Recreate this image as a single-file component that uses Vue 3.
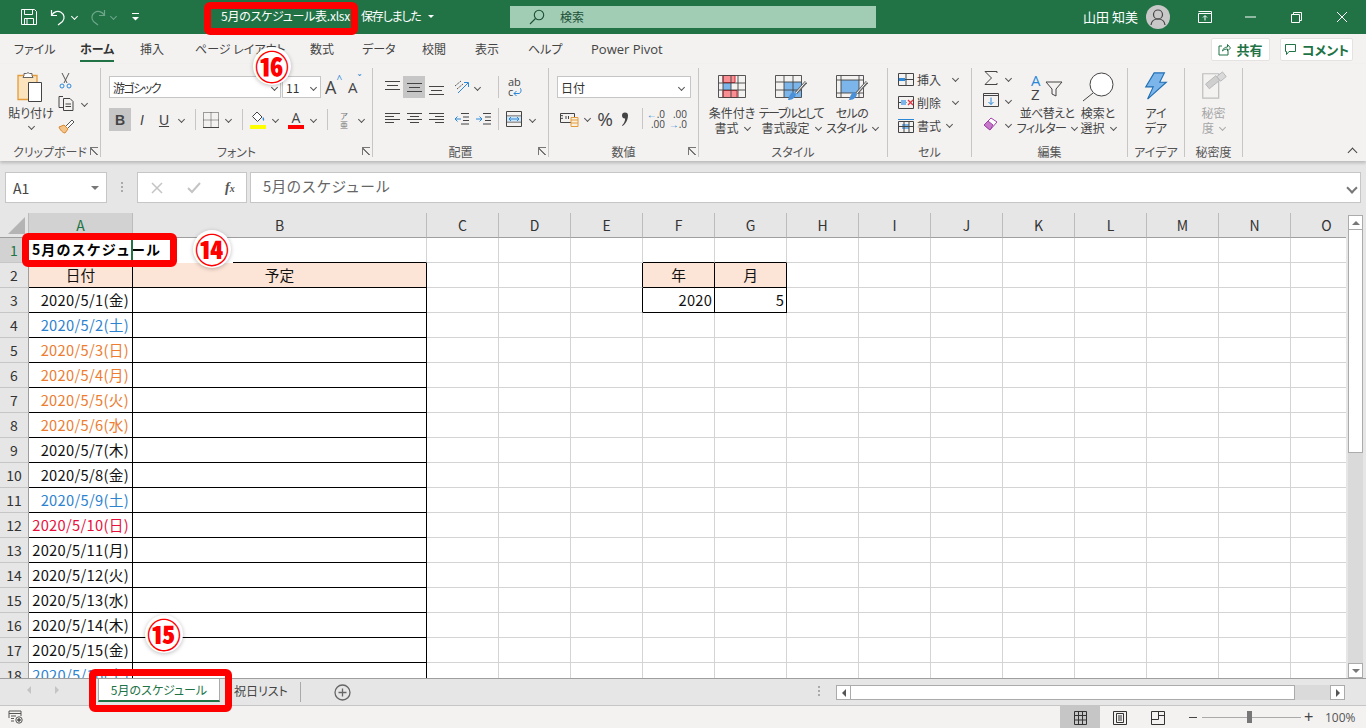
<template>
  <div class="app">
    <header class="titlebar">
      <svg class="qat-save" width="18" height="18" viewBox="0 0 18 18" fill="none" stroke="#fff"><path d="M1.5 1.5h13l2 2v13h-15z"/><path d="M4.5 1.500v5h8v-5M4.500 16.500v-6h9v6M7 10.500v6"/></svg>
      <svg class="qat-undo" width="17" height="18" viewBox="0 0 17 18" fill="none" stroke="#fff" stroke-width="1.2"><path d="M1.5 2v5.5H7M1.8 7C4 3.5 8 2.5 11 4.2c3.5 2 4 6.500 1.500 9.300L8 17"/></svg>
      <i class="chev white qat-c1"></i>
      <svg class="qat-redo" width="17" height="18" viewBox="0 0 17 18" fill="none" stroke="#6ea58a" stroke-width="1.2"><path d="M15.500 2v5.500H10M15.200 7C13 3.500 9 2.500 6 4.200c-3.500 2-4 6.500-1.500 9.300L9 17"/></svg>
      <i class="chev dim qat-c2"></i>
      <svg class="qat-more" width="9" height="9" viewBox="0 0 9 9" fill="#fff"><rect x="1" y="0" width="7" height="1"/><path d="M1 4h7L4.500 7.500z"/></svg>
      <span class="doc-name">5月のスケジュール表.xlsx</span>
      <span class="doc-dash">-</span>
      <span class="doc-state">保存しました</span>
      <i class="caret-down"></i>
      <div class="searchbox">
        <svg width="16" height="16" viewBox="0 0 16 16" fill="none" stroke="#1d4f38" stroke-width="1.100"><circle cx="10" cy="6" r="4.700"/><path d="M6.500 9.500L1 15"/></svg>
        <span>検索</span>
      </div>
      <span class="username">山田 知美</span>
      <div class="avatar">
        <svg width="24" height="24" viewBox="0 0 24 24" fill="none" stroke="#444" stroke-width="1.200"><circle cx="12" cy="9.500" r="4.500"/><path d="M5 20c.5-4 3.500-6 7-6s6.500 2 7 6"/></svg>
      </div>
      <svg class="win-ribbon" width="14" height="12" viewBox="0 0 14 12" fill="none" stroke="#fff"><path d="M.5 2.500h13v9H.5zM.5.500h13v2"/><path d="M7 9.500V5M5 6.500l2-2 2 2"/></svg>
      <svg class="win-min" width="11" height="2" viewBox="0 0 11 2"><rect width="11" height="1" y=".5" fill="#fff"/></svg>
      <svg class="win-max" width="11" height="11" viewBox="0 0 11 11" fill="none" stroke="#fff"><path d="M.5 2.500h8v8h-8zM2.500 2.500v-2h8v8h-2"/></svg>
      <svg class="win-close" width="12" height="12" viewBox="0 0 12 12" fill="none" stroke="#fff"><path d="M1 1l10 10M11 1L1 11"/></svg>
    </header>

    <nav class="tabs">
      <span class="tab-track" v-for="t in tabs" :key="t.label" :style="{ width: t.width + 'px' }">
        <span class="tab-label" :class="{ active: t.active, latin: t.latin }">{{ t.label }}</span>
      </span>
      <div class="tabs-actions">
        <button class="share-btn share">
          <svg width="13" height="13" viewBox="0 0 13 13" fill="none" stroke="#217346"><path d="M4 3H1v9h9V8M4.500 8C5 5.500 7 4 9.500 4V1.500L12.500 5 9.500 8V6C7.500 6 6 6.500 4.500 8z"/></svg>
          <span>共有</span>
        </button>
        <button class="share-btn comment">
          <svg width="13" height="13" viewBox="0 0 13 13" fill="none" stroke="#217346"><path d="M1.500 1.500h10v7H5l-2.500 3v-3h-1z"/></svg>
          <span>コメント</span>
        </button>
      </div>
    </nav>

    <section class="ribbon">
      <div class="group g-clip">
        <div class="body clip-body">
          <div class="big-btn paste">
            <svg width="30" height="32" viewBox="0 0 30 32" fill="none">
              <path d="M2 4.500h19v24H2z" fill="#fbe3bd" stroke="#e39c3c" stroke-width="1.300"/>
              <path d="M8 4.500V2.500h2.500a2 2 0 0 1 3 0H16v2l1 2H7z" fill="#fff" stroke="#666"/>
              <path d="M12.500 11.500h13v19h-13z" fill="#fff" stroke="#444"/>
            </svg>
            <span class="big-text">貼り付け</span>
            <i class="chev"></i>
          </div>
          <div class="clip-col">
            <svg width="16" height="17" viewBox="0 0 16 17" fill="none" stroke="#555"><path d="M4 1l5 10M11 1L6 11"/><circle cx="4" cy="14" r="2" stroke="#2b88d8"/><circle cx="11" cy="14" r="2" stroke="#2b88d8"/></svg>
            <div class="row-ic">
              <svg width="17" height="17" viewBox="0 0 17 17" fill="none" stroke="#444"><path d="M5 1.500H1v11h4"/><path d="M5.500 3.500H12l3 3v9H5.500zM7.500 9h5.500M7.500 11.500h5.500"/></svg>
              <i class="chev"></i>
            </div>
            <svg width="17" height="16" viewBox="0 0 17 16" fill="none"><path d="M1 9l5-2 4 4-3 4c-2 0-5-3-6-6z" fill="#f3c489" stroke="#d9862b"/><path d="M8 8l6-6 2 2-6 6" stroke="#555" fill="#fff"/></svg>
          </div>
        </div>
        <div class="glabel">クリップボード</div>
        <i class="launch"></i>
      </div>

      <div class="group g-font">
        <div class="body font-body">
          <div class="tool-row">
            <div class="combo font-name"><span>游ゴシック</span><i class="chev"></i></div>
            <div class="combo font-size"><span>11</span><i class="chev"></i></div>
            <span class="grow-a big">A<sup>^</sup></span>
            <span class="grow-a small">A<sup>ˇ</sup></span>
          </div>
          <div class="tool-row second">
            <span class="fmt-btn on"><b>B</b></span>
            <span class="fmt-btn ital">I</span>
            <span class="fmt-btn under">U</span><i class="chev c-u"></i>
            <span class="sep sep-1"></span>
            <svg class="ic-border" width="16" height="16" viewBox="0 0 16 16" fill="none" stroke="#444" stroke-dasharray="1 1"><path d="M.5.500h15v15H.5zM8 .5v15M.5 8h15"/><path d="M0 15.500h16" stroke-dasharray="none"/></svg><i class="chev c-b"></i>
            <span class="sep sep-2"></span>
            <svg class="ic-fill" width="16" height="18" viewBox="0 0 16 18" fill="none"><path d="M7 1l5 5-4.500 4.500-5-5z" stroke="#444" fill="#fff"/><path d="M13 6c1.500 1.500 1.500 3 .5 4-.6-.8-1-1.500-1-2.500z" fill="#2b88d8"/><rect y="14" width="16" height="4" fill="#ffff00"/></svg><i class="chev c-f"></i>
            <span class="color-a">A</span><i class="chev c-a"></i>
            <span class="sep sep-3"></span>
            <span class="phonetic"><small>ア</small><em>亜</em></span><i class="chev c-p"></i>
          </div>
        </div>
        <div class="glabel">フォント</div>
        <i class="launch"></i>
      </div>

      <div class="group g-align">
        <div class="body">
          <div class="tool-row al-row">
            <span class="al-slot"><svg class="high" width="15" height="10" viewBox="0 0 15 10" stroke="#444"><path d="M0 1.500h15M2 5.500h11M0 9.500h15"/></svg></span>
            <span class="al-slot on"><svg width="15" height="10" viewBox="0 0 15 10" stroke="#444"><path d="M0 1.500h15M2 5.500h11M0 9.500h15"/></svg></span>
            <span class="al-slot"><svg class="low" width="15" height="10" viewBox="0 0 15 10" stroke="#444"><path d="M0 1.500h15M2 5.500h11M0 9.500h15"/></svg></span>
            <svg class="al-orient" width="16" height="16" viewBox="0 0 16 16" fill="none"><path d="M1 7l6-5M3 10l6-5" stroke="#555" stroke-dasharray="2 1"/><path d="M4 14L14 4M10 3.500h4.500V8" stroke="#2b88d8"/></svg><i class="chev c-o"></i>
            <span class="sep sep-4"></span>
            <span class="wrap-ic"><span>ab</span><span class="wrap-2">c<svg width="9" height="9" viewBox="0 0 9 9" fill="none" stroke="#2b88d8"><path d="M7 0c1.500 1 1.500 5-1 5.500H1M3.500 3L1 5.500 3.500 8"/></svg></span></span>
          </div>
          <div class="tool-row al-row second2">
            <span class="al-slot"><svg width="15" height="14" viewBox="0 0 15 14" stroke="#444"><path d="M0 1.500h15M0 4.500h9M0 7.500h15M0 10.500h9"/></svg></span>
            <span class="al-slot"><svg width="15" height="14" viewBox="0 0 15 14" stroke="#444"><path d="M0 1.500h15M3 4.500h9M0 7.500h15M3 10.500h9"/></svg></span>
            <span class="al-slot"><svg width="15" height="14" viewBox="0 0 15 14" stroke="#444"><path d="M0 1.500h15M6 4.500h9M0 7.500h15M6 10.500h9"/></svg></span>
            <svg class="al-ind" width="15" height="14" viewBox="0 0 15 14" fill="none"><path d="M7 1.500h8M9 5h6M9 8.500h6M7 12h8" stroke="#444"/><path d="M7 7H1M3.500 4.500L1 7l2.500 2.500" stroke="#2b88d8"/></svg>
            <svg class="al-ind2" width="15" height="14" viewBox="0 0 15 14" fill="none"><path d="M7 1.500h8M9 5h6M9 8.500h6M7 12h8" stroke="#444"/><path d="M0 7h6M3.500 4.500L6 7 3.500 9.500" stroke="#2b88d8"/></svg>
            <span class="sep sep-5"></span>
            <svg class="al-merge" width="16" height="16" viewBox="0 0 16 16" fill="none"><path d="M.5.500h15v15H.5zM.5 5h15M.5 11h15" stroke="#444"/><rect x="1" y="5.500" width="14" height="5" fill="#cfe4f7"/><path d="M3 8h10M5 6l-2 2 2 2M11 6l2 2-2 2" stroke="#2b88d8"/></svg><i class="chev c-m"></i>
          </div>
        </div>
        <div class="glabel">配置</div>
        <i class="launch"></i>
      </div>

      <div class="group g-num">
        <div class="body">
          <div class="tool-row">
            <div class="combo num-format"><span>日付</span><i class="chev"></i></div>
          </div>
          <div class="tool-row num-row">
            <svg class="ic-acct" width="20" height="16" viewBox="0 0 20 16" fill="none"><path d="M.5 2.500h14v9H.5z" stroke="#444"/><path d="M3 7a1.500 1.500 0 1 1 0-2M6 5v3M8.500 5v3" stroke="#444"/><path d="M11 6.500h7v9h-7zM11 9h7M11 12h7" stroke="#e39c3c" fill="#f9f0e0"/></svg><i class="chev c-ac"></i>
            <span class="pct">%</span>
            <svg class="comma" width="8" height="14" viewBox="0 0 8 14" fill="#444"><path d="M1 3.500a3 3 0 1 1 6 0C7 8 4.500 12 1.500 14l-.5-.7C3 11.500 4 9.500 4.200 6.500 2.300 6.700 1 5.300 1 3.500z"/></svg>
            <span class="sep sep-6"></span>
            <span class="dec"><span><b>←</b>.0</span><span>.00</span></span>
            <span class="dec two"><span>.00</span><span><b>→</b>.0</span></span>
          </div>
        </div>
        <div class="glabel">数値</div>
        <i class="launch"></i>
      </div>

      <div class="group g-style">
        <div class="body style-body">
          <div class="big-btn s-cond">
            <svg width="28" height="24" viewBox="0 0 28 24" fill="none"><path d="M5 .5h12v7H5zM5 15.500h14v7H5z" fill="#f98f93" stroke="#d9232e"/><rect x="5" y="8" width="8" height="7" fill="#7cb5ea"/><path d="M.5.500h27v22H.5zM.5 8h27M.5 15h27M5 .5v22M13 .5v22M20 .5v22" stroke="#444" stroke-width=".9"/></svg>
            <span class="big-text">条件付き</span>
            <span class="big-text">書式<i class="chev inl"></i></span>
          </div>
          <div class="big-btn s-table">
            <svg width="32" height="26" viewBox="0 0 32 26" fill="none"><rect x="9" y="7" width="18" height="15" fill="#7cb5ea"/><path d="M.5.500h26v22H.5zM.5 7h26M.5 15h26M9 .5v22M18 .5v22" stroke="#444" stroke-width=".9"/><path d="M31 7L21 18" stroke="#666" stroke-width="3"/><path d="M30.500 7L21 18" stroke="#fff"/><path d="M13 25c3 0 7-1 8-6l-3-2c-3 1-4 5-5 8z" fill="#4a90d9"/></svg>
            <span class="big-text tight">テーブルとして</span>
            <span class="big-text">書式設定<i class="chev inl"></i></span>
          </div>
          <div class="big-btn s-cell">
            <svg width="32" height="26" viewBox="0 0 32 26" fill="none"><rect x="5" y="5" width="18" height="13" fill="#7cb5ea"/><path d="M.5.500h27v22H.5zM.5 5h27M.5 18h27M5 .5v22M23 .5v22" stroke="#444" stroke-width=".9"/><path d="M31 7L21 18" stroke="#666" stroke-width="3"/><path d="M30.500 7L21 18" stroke="#fff"/><path d="M13 25c3 0 7-1 8-6l-3-2c-3 1-4 5-5 8z" fill="#4a90d9"/></svg>
            <span class="big-text narrow">セルの</span>
            <span class="big-text narrow">スタイル<i class="chev inl"></i></span>
          </div>
        </div>
        <div class="glabel">スタイル</div>
      </div>

      <div class="group g-cells">
        <div class="body cells-body">
          <div class="cell-cmd">
            <svg width="16" height="13" viewBox="0 0 16 13" fill="none"><path d="M.5.500h15v12H.5zM.5 6.500h15M8 .5v12" stroke="#444"/><path d="M1 6.500h6" stroke="#2b88d8" stroke-width="3"/></svg>
            <span>挿入</span><i class="chev"></i>
          </div>
          <div class="cell-cmd">
            <svg width="16" height="13" viewBox="0 0 16 13" fill="none"><path d="M.5.500h15v12H.5zM.5 6.500h8" stroke="#444"/><rect x="3" y="4" width="5" height="5" fill="#7cb5ea"/><path d="M10 4l5 5M15 4l-5 5" stroke="#e0343f" stroke-width="1.300"/></svg>
            <span>削除</span><i class="chev"></i>
          </div>
          <div class="cell-cmd">
            <svg width="16" height="14" viewBox="0 0 16 14" fill="none"><rect x="4" y="5" width="7" height="5" fill="#7cb5ea"/><path d="M.5 2.500h15v11H.5zM.5 7.500h15M6 2.500v11M11 2.500v11" stroke="#444"/><path d="M0 .5h16" stroke="#2b88d8"/></svg>
            <span>書式</span><i class="chev last"></i>
          </div>
        </div>
        <div class="glabel">セル</div>
      </div>

      <div class="group g-edit">
        <div class="body edit-body">
          <div class="edit-col">
            <div class="row-ic">
              <svg width="16" height="16" viewBox="0 0 16 16" fill="none" stroke="#444"><path d="M14 3V1.500H2l6.500 6.500L2 14.500h12V13"/></svg><i class="chev"></i>
            </div>
            <div class="row-ic">
              <svg width="16" height="14" viewBox="0 0 16 14" fill="none"><path d="M.5.500h15v13H.5zM1 2.500h14" stroke="#444"/><path d="M8 4.500v7M5.500 9L8 11.500 10.500 9" stroke="#2b88d8"/></svg><i class="chev"></i>
            </div>
            <div class="row-ic erase">
              <svg width="16" height="14" viewBox="0 0 16 14" fill="none"><path d="M1 8l7-7 6 4-7 8z" fill="#fff" stroke="#a042a8"/><path d="M1 8l4-4 5 4-3 5z" fill="#c678c9" stroke="#a042a8"/></svg><i class="chev"></i>
            </div>
          </div>
          <div class="big-btn e-sort">
            <span class="sort-ic">
              <span class="az"><span class="a">A</span><span>Z</span></span>
              <svg width="18" height="17" viewBox="0 0 18 17" fill="none" stroke="#444"><path d="M1 1h16l-6 7v7l-4-2V8z"/></svg>
            </span>
            <span class="big-text narrow">並べ替えと</span>
            <span class="big-text narrow">フィルター<i class="chev inl"></i></span>
          </div>
          <div class="big-btn e-find">
            <svg width="32" height="30" viewBox="0 0 32 30" fill="none" stroke="#444"><circle cx="19.500" cy="12.500" r="11.500" fill="#fff"/><path d="M11 21L1 29"/></svg>
            <span class="big-text">検索と</span>
            <span class="big-text">選択<i class="chev inl"></i></span>
          </div>
        </div>
        <div class="glabel">編集</div>
      </div>

      <div class="group g-idea">
        <div class="body">
          <div class="big-btn b-idea">
            <svg width="24" height="28" viewBox="0 0 24 30" fill="#7cb5ea" stroke="#1f6fb5" stroke-width="1.200"><path d="M10 1h11l-5 10h7L3 29l6-13H1z"/></svg>
            <span class="big-text">アイ</span>
            <span class="big-text">デア</span>
          </div>
        </div>
        <div class="glabel">アイデア</div>
      </div>

      <div class="group g-sens">
        <div class="body">
          <div class="big-btn b-sens">
            <svg width="30" height="30" viewBox="0 0 30 32" fill="none" stroke="#bdbdbd"><path d="M3 4h17v26H3z" stroke-width="1.300"/><path d="M6 15l11-9 4 5-11 9z" fill="#cfcfcf" stroke="#b5b5b5"/><path d="M18 7l6-5 4 5-6 5z" fill="#d9d9d9" stroke="#b5b5b5"/></svg>
            <span class="big-text mute">秘密</span>
            <span class="big-text mute">度<i class="chev inl mute-c"></i></span>
          </div>
        </div>
        <div class="glabel">秘密度</div>
      </div>

      <i class="collapse"></i>
    </section>

    <section class="formula">
      <div class="namebox"><span>A1</span><i class="caret-gray"></i></div>
      <span class="fdots"></span>
      <div class="fbtns">
        <svg width="12" height="12" viewBox="0 0 12 12" fill="none" stroke="#c4c4c4" stroke-width="1.500"><path d="M1 1l10 10M11 1L1 11"/></svg>
        <svg width="14" height="12" viewBox="0 0 14 12" fill="none" stroke="#c4c4c4" stroke-width="2"><path d="M1 6l4 4 8-9"/></svg>
        <span class="fx">f<small>x</small></span>
      </div>
      <div class="finput">5月のスケジュール</div>
      <i class="chev finput-chev"></i>
    </section>

    <section class="sheet">
      <div class="grid">
        <div class="corner"><span class="corner-tri"></span></div>
        <div v-for="c in columns" :key="c" class="colhead" :class="{ sel: c === 'A' }">{{ c }}</div>
        <template v-for="r in rows" :key="r.n">
          <div class="rowhead" :class="{ sel: r.n === 1 }">{{ r.n }}</div>
          <div v-for="c in columns" :key="c" class="cell" :class="cellClass(r, c)">{{ cellText(r, c) }}</div>
        </template>
      </div>
      <div class="vscroll">
        <span class="sb-btn"><i class="tri up"></i></span>
        <span class="sb-thumb"></span>
        <span class="sb-track"></span>
        <span class="sb-btn"><i class="tri down"></i></span>
      </div>
    </section>

    <section class="sheetbar">
      <i class="nav-l"></i>
      <i class="nav-r"></i>
      <div class="sheet-tab">5月のスケジュール</div>
      <div class="sheet-tab2">祝日リスト</div>
      <span class="tab-sep"></span>
      <svg class="add-sheet" width="17" height="17" viewBox="0 0 17 17" fill="none" stroke="#666" stroke-width="1.300"><circle cx="8.500" cy="8.500" r="7.500"/><path d="M8.500 4.500v8M4.500 8.500h8"/></svg>
      <span class="bar-dots"></span>
      <div class="hscroll">
        <span class="sb-btn h"><i class="tri left"></i></span>
        <span class="hb-thumb"></span>
        <span class="hb-track"></span>
        <span class="sb-btn h"><i class="tri right"></i></span>
      </div>
    </section>

    <footer class="status">
      <svg class="macro" width="15" height="14" viewBox="0 0 15 14" fill="none" stroke="#555"><path d="M1 8V1h12v5M1 3.500h12M3 6h5M3 8.500h3M3 11h3"/><circle cx="11" cy="10" r="3.200"/><circle cx="11" cy="10" r="1.300" fill="#555"/></svg>
      <div class="view on">
        <svg width="13" height="14" viewBox="0 0 13 14" fill="none" stroke="#333"><path d="M.5.500h12v13H.5zM4.500.5v13M8.500.5v13M.5 4.500h12M.5 9h12"/></svg>
      </div>
      <div class="view">
        <svg width="14" height="14" viewBox="0 0 14 14" fill="none" stroke="#333"><path d="M.5.500h13v13H.5zM3.500 2.500h7v9h-7zM5 5h4M5 7h4M5 9h4"/></svg>
      </div>
      <div class="view v3">
        <svg width="14" height="14" viewBox="0 0 14 14" fill="none" stroke="#333"><path d="M.5.500h13v13H.5zM.5 8.500h7V.5M7.500 4.500h6"/></svg>
      </div>
      <span class="zoom-minus"></span>
      <div class="slider"><span class="slider-thumb"></span></div>
      <span class="zoom-plus">+</span>
      <span class="zoom-val">100%</span>
    </footer>

    <!-- annotations on top of the screenshot -->
    <div class="frame f-title"></div>
    <div class="frame f-cell"></div>
    <div class="frame f-tab"></div>
    <span class="badge b16">⑯</span>
    <span class="badge b14">⑭</span>
    <span class="badge b15">⑮</span>
  </div>
</template>

<script setup>
const tabs = [
  { label: 'ファイル', width: 66 },
  { label: 'ホーム', width: 60, active: true },
  { label: '挿入', width: 55 },
  { label: 'ページ レイアウト', width: 115 },
  { label: '数式', width: 52 },
  { label: 'データ', width: 60 },
  { label: '校閲', width: 53 },
  { label: '表示', width: 53 },
  { label: 'ヘルプ', width: 63 },
  { label: 'Power Pivot', width: 90, latin: true }
]

const columns = 'ABCDEFGHIJKLMNO'.split('')

const weekdays = ['日', '月', '火', '水', '木', '金', '土']
const holidays = [3, 4, 5, 6]

const rows = Array.from({ length: 18 }, (_, i) => {
  const n = i + 1
  const row = { n, date: '', tone: '' }
  if (n >= 3) {
    const d = n - 2
    const wd = new Date(2020, 4, d).getDay()
    row.date = `2020/5/${d}(${weekdays[wd]})`
    if (holidays.includes(d)) row.tone = 'orange'
    else if (wd === 6) row.tone = 'blue'
    else if (wd === 0) row.tone = 'red'
  }
  return row
})

function cellText(r, c) {
  if (r.n === 1 && c === 'A') return '5月のスケジュール'
  if (r.n === 2 && c === 'A') return '日付'
  if (r.n === 2 && c === 'B') return '予定'
  if (r.n === 2 && c === 'F') return '年'
  if (r.n === 2 && c === 'G') return '月'
  if (r.n === 3 && c === 'F') return '2020'
  if (r.n === 3 && c === 'G') return '5'
  if (c === 'A') return r.date
  return ''
}

function cellClass(r, c) {
  const out = ['col-' + c]
  const inLeft = c === 'A' || c === 'B'
  const inSmall = c === 'F' || c === 'G'
  if (inLeft || (inSmall && r.n <= 3)) out.push('bb')
  if ((inLeft && r.n >= 2) || ((inSmall || c === 'E') && (r.n === 2 || r.n === 3))) out.push('br')
  if (r.n === 2 && (inLeft || inSmall)) out.push('head')
  if (r.n === 3 && inSmall) out.push('num')
  if (c === 'A' && r.n >= 3) out.push('date', r.tone)
  if (r.n === 1 && c === 'A') out.push('title')
  return out
}
</script>

<style>
html, body {
  margin: 0;
  overflow: hidden;
  background: #e6e6e6;
}
</style>

<style scoped>
.app {
  position: relative;
  display: flex;
  flex-direction: column;
  width: 1366px;
  height: 728px;
  overflow: hidden;
  background: #e6e6e6;
  color: #444;
  font-family: "Noto Sans CJK JP", "Noto Sans", sans-serif;
  font-size: 12px;
}

i { display: block; flex: none; }
svg { display: block; flex: none; }

.chev {
  width: 4px;
  height: 4px;
  border-right: 1px solid #555;
  border-bottom: 1px solid #555;
  transform: rotate(45deg);
}
.chev.white { border-color: #fff; }
.chev.dim { border-color: #6ea58a; }
.chev.inl { display: inline-block; margin: 0 0 3px 6px; }
.chev.mute-c { border-color: #aaa; }

/* title bar */
.titlebar {
  flex: none;
  display: flex;
  align-items: center;
  height: 34px;
  background: #217346;
  color: #fff;
  font-feature-settings: "palt";
}
.qat-save { margin-left: 20px; }
.qat-undo { margin-left: 12px; }
.qat-c1 { margin-left: 5px; margin-top: -2px; }
.qat-redo { margin-left: 12px; }
.qat-c2 { margin-left: 5px; margin-top: -2px; }
.qat-more { margin-left: 15px; }
.doc-name { margin-left: 81px; margin-top: -3px; width: 126px; font-size: 12px; letter-spacing: -.25px; white-space: nowrap; }
.doc-dash { margin-left: 4px; margin-top: -3px; width: 10px; font-size: 12px; }
.doc-state { margin-top: -3px; width: 60px; font-size: 12px; letter-spacing: -1.200px; white-space: nowrap; }
.caret-down {
  margin-left: 7px;
  margin-top: -2px;
  border-left: 3px solid transparent;
  border-right: 3px solid transparent;
  border-top: 3px solid #fff;
}
.searchbox {
  display: flex;
  align-items: center;
  margin-left: 76px;
  width: 366px;
  height: 22px;
  padding-left: 19px;
  box-sizing: border-box;
  background: #a0cdb3;
  color: #1d4f38;
  font-size: 12px;
}
.searchbox span { margin-left: 15px; margin-top: -2px; }
.username { margin-left: 207px; margin-top: -2px; width: 52px; font-size: 13px; white-space: nowrap; }
.avatar {
  display: flex;
  align-items: center;
  justify-content: center;
  margin-left: 11px;
  width: 24px;
  height: 24px;
  border-radius: 50%;
  background: #c8c8c8;
}
.win-ribbon { margin-left: 28px; }
.win-min { margin-left: 33px; }
.win-max { margin-left: 35px; }
.win-close { margin-left: 34px; }

/* tabs */
.tabs {
  flex: none;
  display: flex;
  align-items: flex-start;
  height: 30px;
  padding-left: 14px;
  background: #f3f2f1;
  color: #444;
  font-size: 12px;
  font-feature-settings: "palt";
}
.tab-track { flex: none; padding-top: 6px; white-space: nowrap; }
.tab-label { display: inline-block; height: 22px; line-height: 18px; box-sizing: border-box; }
.tab-label.active { font-weight: 700; color: #333; border-bottom: 2px solid #217346; }
.tab-label.latin { font-family: "Open Sans", sans-serif; font-size: 13px; }
.tabs-actions { display: flex; gap: 10px; margin-left: auto; margin-right: 13px; margin-top: 4px; }
.share-btn {
  display: flex;
  align-items: center;
  justify-content: center;
  gap: 5px;
  height: 23px;
  padding: 0;
  border: 1px solid #e4e3e2;
  border-radius: 2px;
  background: #fff;
  color: #217346;
  font: 700 13px "Noto Sans CJK JP", sans-serif;
  font-feature-settings: "palt";
}
.share { width: 59px; }
.comment { width: 73px; }

/* ribbon */
.ribbon {
  position: relative;
  z-index: 2;
  flex: none;
  display: flex;
  height: 97px;
  background: #f3f2f1;
  box-shadow: 0 2px 3px rgba(0, 0, 0, .2);
  font-feature-settings: "palt";
}
.group {
  position: relative;
  flex: none;
  display: flex;
  flex-direction: column;
  box-sizing: border-box;
  height: 89px;
  margin-top: 4px;
  border-right: 1px solid #c8c6c4;
}
.body { flex: 1; min-height: 0; }
.glabel {
  flex: none;
  height: 10px;
  line-height: 10px;
  text-align: center;
  font-size: 12px;
  color: #555;
  white-space: nowrap;
}
.launch {
  position: absolute;
  right: 2px;
  bottom: 2px;
  width: 7px;
  height: 7px;
  border-left: 1px solid #777;
  border-top: 1px solid #777;
  background: linear-gradient(45deg, transparent 40%, #777 40%, #777 55%, transparent 55%);
}
.g-clip { width: 101px; }
.g-font { width: 272px; }
.g-align { width: 176px; }
.g-num { width: 150px; }
.g-style { width: 189px; }
.g-cells { width: 84px; }
.g-edit { width: 156px; }
.g-idea { width: 57px; }
.g-sens { width: 58px; }

.big-btn {
  display: flex;
  flex-direction: column;
  align-items: center;
}
.big-text {
  font-size: 12px;
  line-height: 15px;
  white-space: nowrap;
}
.big-text.mute { color: #a6a6a6; }
.big-text.tight { letter-spacing: -1.500px; }
.big-text.narrow { letter-spacing: -.6px; }

.clip-body { display: flex; padding-left: 8px; }
.paste { width: 46px; padding-top: 3px; }
.paste .big-text { margin-top: 2px; }
.paste .chev { margin-top: 4px; }
.clip-col {
  display: flex;
  flex-direction: column;
  gap: 6px;
  margin-left: 4px;
  padding-top: 4px;
}
.row-ic { display: flex; align-items: center; gap: 7px; }

.tool-row { display: flex; align-items: center; }
.font-body, .g-align .body, .g-num .body { padding-left: 8px; padding-top: 8px; }
.combo {
  display: flex;
  align-items: center;
  justify-content: space-between;
  box-sizing: border-box;
  height: 22px;
  border: 1px solid #c6c6c6;
  background: #fff;
  color: #333;
  padding: 0 6px 0 3px;
}
.font-name { width: 172px; padding-right: 3px; }
.font-name span { letter-spacing: -1.500px; }
.font-size { width: 39px; margin-left: 1px; padding-right: 4px; }
.grow-a { position: relative; display: block; font-family: "Open Sans", sans-serif; white-space: nowrap; }
.grow-a sup { position: absolute; top: -3px; font-size: 10px; color: #2b88d8; line-height: 12px; }
.grow-a.big { margin-left: 4px; width: 23px; font-size: 18px; line-height: 22px; }
.grow-a.small { width: 16px; font-size: 15px; line-height: 22px; }
.second { margin-top: 10px; height: 23px; }
.fmt-btn {
  display: flex;
  align-items: center;
  justify-content: center;
  width: 22px;
  height: 23px;
  font: 14px "Liberation Sans", sans-serif;
  color: #444;
}
.fmt-btn.on { background: #c6c6c6; }
.fmt-btn.ital { font-style: italic; }
.fmt-btn.under { text-decoration: underline; }
.c-u { margin-left: 4px; }
.sep { display: block; flex: none; width: 1px; height: 21px; background: #c8c6c4; }
.sep-1 { margin-left: 11px; }
.ic-border { margin-left: 7px; }
.c-b { margin-left: 7px; }
.sep-2 { margin-left: 11px; }
.ic-fill { margin-left: 7px; }
.c-f { margin-left: 7px; }
.color-a {
  box-sizing: border-box;
  width: 16px;
  height: 18px;
  margin-left: 10px;
  border-bottom: 4px solid #f00;
  text-align: center;
  font: 14px/14px "Open Sans", sans-serif;
}
.c-a { margin-left: 7px; }
.sep-3 { margin-left: 11px; }
.phonetic { display: flex; flex-direction: column; align-items: center; margin-left: 11px; width: 10px; line-height: 9px; color: #777; }
.phonetic small { font-size: 8px; }
.phonetic em { font-size: 8px; font-style: normal; }
.c-p { margin-left: 10px; }

.g-align .body { padding-left: 0; }
.al-row { padding-left: 8px; }
.al-slot {
  display: flex;
  align-items: center;
  justify-content: center;
  flex: none;
  width: 22px;
  height: 22px;
}
.al-slot.on { background: #c6c6c6; }
.al-slot .low { margin-top: 5px; }
.al-slot .high { margin-top: -5px; }
.al-orient { margin-left: 7px; }
.c-o { margin-left: 5px; }
.sep-4 { margin-left: 18px; height: 22px; }
.wrap-ic {
  display: flex;
  flex-direction: column;
  margin-left: 9px;
  font: 11px/10px "Open Sans", sans-serif;
  color: #444;
}
.wrap-2 { display: flex; align-items: center; }
.second2 { margin-top: 10px; }
.al-ind { margin-left: 7px; }
.al-ind2 { margin-left: 7px; }
.sep-5 { margin-left: 7px; height: 22px; }
.al-merge { margin-left: 7px; }
.c-m { margin-left: 8px; }

.num-format { width: 134px; padding-left: 3px; }
.num-row { margin-top: 9px; height: 23px; padding-left: 3px; }
.c-ac { margin-left: 5px; }
.pct { margin-left: 7px; width: 16px; font: 400 19px/20px "Open Sans", sans-serif; text-align: center; color: #444; }
.comma { margin-left: 8px; }
.sep-6 { margin-left: 13px; }
.dec {
  display: flex;
  flex-direction: column;
  align-items: flex-end;
  margin-left: 6px;
  width: 16px;
  font: 10px/10px "Open Sans", sans-serif;
  color: #444;
  white-space: nowrap;
}
.dec.two { margin-left: 6px; }
.dec b { color: #2b88d8; font-weight: 400; }

.style-body { display: flex; padding-left: 4px; }
.style-body .big-btn { padding-top: 7px; }
.style-body .big-text:nth-of-type(1) { margin-top: 4px; }
.s-cond svg { margin-bottom: 2px; }
.s-cond { width: 58px; }
.s-table { width: 60px; }
.s-cell { width: 62px; }

.cells-body { padding: 0 0 0 10px; }
.cell-cmd { display: flex; align-items: center; height: 23px; }
.cell-cmd span { margin-left: 3px; width: 31px; font-size: 12px; }
.cell-cmd .chev { margin-left: 5px; margin-top: -2px; }
.cell-cmd .chev.last { margin-left: -1px; }

.edit-body { display: flex; padding-left: 11px; }
.edit-col { display: flex; flex-direction: column; gap: 7px; padding-top: 2px; width: 42px; }
.row-ic.erase { margin-top: 3px; }
.e-sort { width: 60px; margin-left: -8px; }
.sort-ic { display: flex; align-items: flex-end; height: 30px; margin-top: 3px; margin-bottom: 4px; }
.sort-ic svg { margin-bottom: 3px; margin-left: 1px; }
.az { display: flex; flex-direction: column; font: 15px/14px "Open Sans", sans-serif; width: 13px; }
.az .a { color: #2b88d8; }
.e-find { width: 44px; padding-top: 4px; margin-left: -1px; }
.e-find .big-text:nth-of-type(1) { margin-top: 3px; }

.b-idea { padding-top: 4px; }
.b-idea .big-text:nth-of-type(1) { margin-top: 5px; }
.b-sens .big-text:nth-of-type(1) { margin-top: 5px; }
.b-sens { padding-top: 2px; }

.collapse {
  position: absolute;
  right: 10px;
  bottom: 5px;
  width: 6px;
  height: 6px;
  border-left: 1px solid #444;
  border-top: 1px solid #444;
  transform: rotate(45deg);
}

/* formula bar */
.formula {
  flex: none;
  display: flex;
  height: 31px;
  margin-top: 11px;
  padding-left: 5px;
  position: relative;
}
.namebox {
  display: flex;
  align-items: center;
  justify-content: space-between;
  box-sizing: border-box;
  width: 102px;
  height: 31px;
  padding: 0 7px;
  border: 1px solid #c6c6c6;
  background: #fff;
  font-size: 14px;
}
.caret-gray {
  border-left: 4px solid transparent;
  border-right: 4px solid transparent;
  border-top: 4px solid #777;
}
.fdots {
  display: block;
  flex: none;
  margin: 10px 14px 0 14px;
  width: 2px;
  height: 11px;
  background: repeating-linear-gradient(#aaa 0 2px, transparent 2px 4px);
}
.fbtns {
  display: flex;
  align-items: center;
  gap: 24px;
  box-sizing: border-box;
  width: 110px;
  height: 31px;
  padding-left: 13px;
  border: 1px solid #c6c6c6;
  background: #fff;
}
.fx { font: italic 700 14px "Liberation Serif", serif; color: #555; }
.fx small { font-size: 10px; }
.finput {
  box-sizing: border-box;
  width: 1111px;
  height: 31px;
  margin-left: 3px;
  padding-left: 12px;
  border: 1px solid #c6c6c6;
  background: #fff;
  font-size: 14.700px;
  line-height: 25px;
  color: #666;
  letter-spacing: .3px;
}
.finput-chev { position: absolute; right: 10px; top: 12px; width: 6px; height: 6px; border-width: 2px; border-color: #777; }

/* sheet */
.sheet {
  flex: none;
  display: flex;
  height: 466px;
  margin-top: 10px;
  background: #e6e6e6;
  border-bottom: 1px solid #9e9e9e;
  box-sizing: border-box;
}
.grid {
  flex: none;
  display: grid;
  grid-template-columns: 29px 104px 294px repeat(13, 72px);
  grid-template-rows: 25px;
  grid-auto-rows: 25px;
  width: 1346px;
  overflow: hidden;
  background: #e6e6e6;
  font-size: 14.700px;
  color: #111;
}
.corner {
  position: relative;
  box-sizing: border-box;
  border-right: 1px solid #bbb;
  border-bottom: 1px solid #9e9e9e;
}
.corner-tri {
  position: absolute;
  right: 3px;
  bottom: 3px;
  border-left: 17px solid transparent;
  border-bottom: 17px solid #b4b4b4;
}
.colhead {
  box-sizing: border-box;
  border-right: 1px solid #bcbcbc;
  border-bottom: 1px solid #9e9e9e;
  text-align: center;
  line-height: 24px;
  font-size: 14px;
  color: #333;
}
.colhead.sel { background: #d2d2d2; color: #217346; border-bottom: 2px solid #217346; }
.rowhead {
  box-sizing: border-box;
  border-right: 1px solid #9e9e9e;
  border-bottom: 1px solid #c6c6c6;
  text-align: center;
  line-height: 24px;
  font-size: 14px;
  color: #333;
}
.rowhead.sel { background: #d2d2d2; color: #217346; }
.cell {
  box-sizing: border-box;
  border-right: 1px solid #d4d4d4;
  border-bottom: 1px solid #d4d4d4;
  background: #fff;
  line-height: 23px;
  white-space: nowrap;
}
.cell.bb { border-bottom-color: #000; }
.cell.br { border-right-color: #000; }
.cell.head { background: #fce4d6; text-align: center; }
.cell.num { text-align: right; padding-right: 2px; letter-spacing: .2px; }
.cell.date { text-align: right; padding-right: 3px; letter-spacing: .3px; }
.cell.blue { color: #2e83d0; }
.cell.orange { color: #ed7d31; }
.cell.red { color: #e8103c; }
.cell.title {
  position: relative;
  z-index: 1;
  padding-left: 3px;
  border-right: 0;
  background: #fff;
  box-shadow: 100px 0 0 #fff;
  font-weight: 700;
  font-size: 14px;
  letter-spacing: 1.100px;
  color: #000;
  overflow: visible;
}
.cell.title::after {
  content: "";
  position: absolute;
  right: 0;
  top: 2px;
  width: 2px;
  height: 20px;
  background: #217346;
}
.vscroll {
  display: flex;
  flex-direction: column;
  margin: 2px 3px 0 2px;
  width: 15px;
}
.sb-btn {
  display: flex;
  align-items: center;
  justify-content: center;
  flex: none;
  box-sizing: border-box;
  width: 15px;
  height: 15px;
  border: 1px solid #ababab;
  background: #fff;
}
.sb-thumb {
  flex: none;
  box-sizing: border-box;
  height: 223px;
  border: 1px solid #ababab;
  border-top: 0;
  background: #fff;
}
.sb-track { flex: 1; background: #dadada; }
.tri { width: 0; height: 0; }
.tri.up { border-left: 4px solid transparent; border-right: 4px solid transparent; border-bottom: 4px solid #777; }
.tri.down { border-left: 4px solid transparent; border-right: 4px solid transparent; border-top: 4px solid #777; }
.tri.left { border-top: 4px solid transparent; border-bottom: 4px solid transparent; border-right: 4px solid #555; }
.tri.right { border-top: 4px solid transparent; border-bottom: 4px solid transparent; border-left: 4px solid #555; }

/* sheet tabs */
.sheetbar {
  flex: none;
  display: flex;
  align-items: flex-start;
  box-sizing: border-box;
  height: 27px;
  background: #e6e6e6;
  border-bottom: 1px solid #c6c6c6;
}
.nav-l {
  margin: 7px 0 0 27px;
  border-top: 4px solid transparent;
  border-bottom: 4px solid transparent;
  border-right: 4px solid #c4c4c4;
}
.nav-r {
  margin: 7px 0 0 24px;
  border-top: 4px solid transparent;
  border-bottom: 4px solid transparent;
  border-left: 4px solid #c4c4c4;
}
.sheet-tab {
  box-sizing: border-box;
  width: 122px;
  height: 23px;
  margin-left: 39px;
  background: #fff;
  border-bottom: 2px solid #217346;
  border-left: 1px solid #aaa;
  border-right: 1px solid #aaa;
  text-align: center;
  line-height: 22px;
  color: #217346;
  font-feature-settings: "palt";
}
.sheet-tab2 {
  margin-left: 12px;
  padding-left: 2px;
  width: 66px;
  line-height: 24px;
  color: #444;
  font-feature-settings: "palt";
}
.tab-sep { display: block; flex: none; width: 1px; height: 20px; margin-top: 3px; background: #aaa; }
.add-sheet { margin: 5px 0 0 33px; }
.bar-dots {
  display: block;
  flex: none;
  width: 2px;
  height: 11px;
  margin: 7px 0 0 467px;
  background: repeating-linear-gradient(#aaa 0 2px, transparent 2px 4px);
}
.hscroll { display: flex; margin: 6px 0 0 16px; width: 509px; height: 15px; }
.sb-btn.h { width: 15px; }
.hb-thumb {
  flex: none;
  box-sizing: border-box;
  width: 444px;
  border: 1px solid #ababab;
  border-left: 0;
  background: #fff;
}
.hb-track { flex: 1; background: #dadada; }

/* status bar */
.status {
  flex: 1;
  display: flex;
  align-items: stretch;
  background: #f3f2f1;
}
.macro { margin: 4px 0 0 8px; }
.view {
  display: flex;
  align-items: center;
  justify-content: center;
  width: 40px;
}
.view.on { margin-left: 1037px; background: #c6c6c6; }
.view.v3 { margin-left: -2px; }
.zoom-minus { display: block; flex: none; width: 8px; height: 1px; margin: 11px 0 0 11px; background: #444; }
.slider { position: relative; width: 99px; height: 1px; margin: 11px 0 0 5px; background: #aaa; }
.slider-thumb {
  position: absolute;
  left: 45px;
  top: -6px;
  width: 5px;
  height: 12px;
  background: #777;
}
.zoom-plus { width: 10px; margin-left: 3px; font: 16px/22px "Liberation Sans", sans-serif; color: #444; }
.zoom-val { margin-left: 11px; font: 12px/23px "Open Sans", sans-serif; color: #555; }

/* annotations */
.frame {
  position: absolute;
  z-index: 5;
  box-sizing: border-box;
  border: 7px solid #f00;
  border-radius: 6px;
}
.f-title { left: 204px; top: 2px; width: 154px; height: 33px; }
.f-cell { left: 22px; top: 233px; width: 155px; height: 34px; }
.f-tab { left: 89px; top: 669px; width: 143px; height: 43px; }
.badge {
  position: absolute;
  z-index: 6;
  display: flex;
  align-items: center;
  justify-content: center;
  width: 38px;
  height: 38px;
  border-radius: 50%;
  background: #fff;
  box-shadow: 0 1px 4px rgba(0, 0, 0, .25);
  color: #f00;
  font-size: 34px;
  font-weight: 900;
  line-height: 38px;
}
.b16 { left: 253px; top: 47px; }
.b14 { left: 193px; top: 230px; }
.b15 { left: 145px; top: 615px; }
</style>
